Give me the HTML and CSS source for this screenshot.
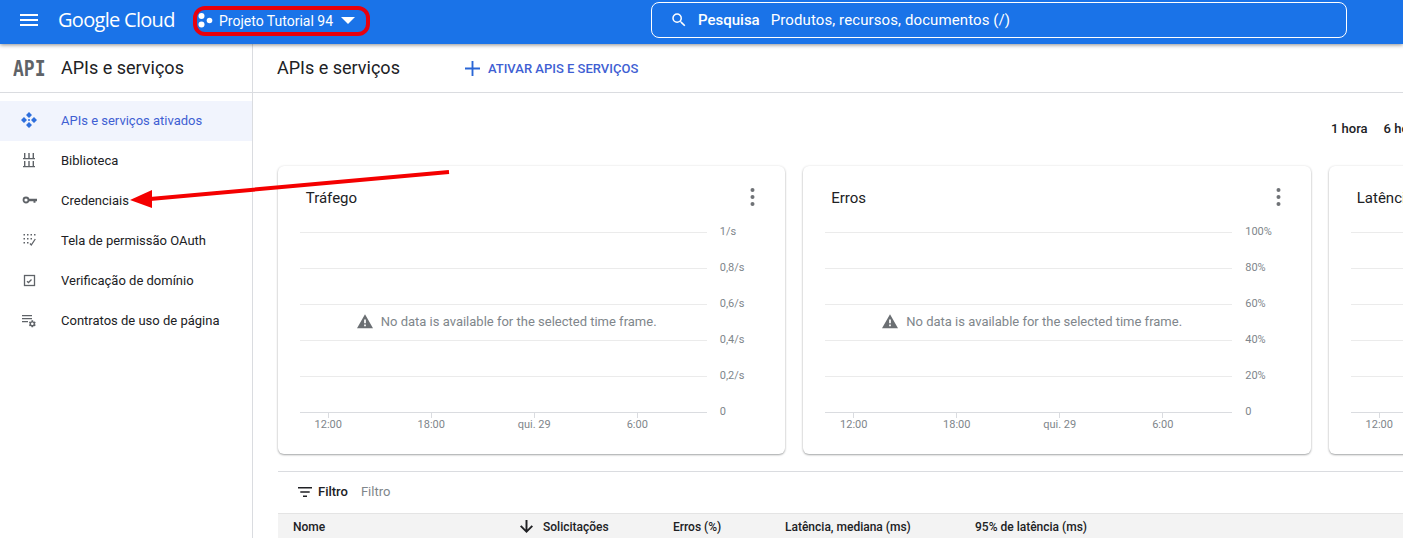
FILE: index.html
```html
<!DOCTYPE html>
<html lang="pt">
<head>
  <meta charset="UTF-8">
  <meta name="viewport" content="width=device-width, initial-scale=1.0">
  <title>APIs e serviços</title>
  <link rel="stylesheet" href="styles.css">
</head>
<body>
  <header class="topbar">
    <svg class="menu-icon" viewBox="0 0 18 12"><path d="M0 0h18v2H0zM0 5h18v2H0zM0 10h18v2H0z"/></svg>
    <span class="logo">Google Cloud</span>
    <div class="project">
      <svg class="project-icon" viewBox="0 0 15 15"><circle cx="3.500" cy="3" r="3"/><circle cx="3.500" cy="11.500" r="3"/><circle cx="11.500" cy="7.500" r="2.800"/></svg>
      <span class="project-name">Projeto Tutorial 94</span>
      <svg class="project-caret" viewBox="0 0 14 7"><path d="M0 0l7 7 7-7z"/></svg>
    </div>
    <div class="search">
      <svg class="search-icon" viewBox="0 0 24 24"><path d="M15.5 14h-.79l-.28-.27A6.47 6.47 0 0 0 16 9.5 6.5 6.5 0 1 0 9.5 16c1.61 0 3.09-.59 4.23-1.57l.27.28v.79l5 4.99L20.49 19l-4.99-5zm-6 0C7.01 14 5 11.99 5 9.5S7.01 5 9.5 5 14 7.01 14 9.5 11.99 14 9.5 14z"/></svg>
      <strong>Pesquisa</strong>
      <span>Produtos, recursos, documentos (/)</span>
    </div>
  </header>

  <div class="layout">
    <aside class="sidebar">
      <div class="side-head">
        <span class="api-mark">API</span>
        <span class="side-title">APIs e serviços</span>
      </div>
      <nav class="nav">
        <a class="nav-item active">
          <svg class="nav-icon" viewBox="0 0 16 16"><path d="M8 0l3 3-3 3-3-3zM8 10l3 3-3 3-3-3zM3 5l3 3-3 3-3-3zM13 5l3 3-3 3-3-3z"/><circle cx="8" cy="8" r="1"/></svg>
          APIs e serviços ativados
        </a>
        <a class="nav-item">
          <svg class="nav-icon" viewBox="0 0 16 16"><path d="M3 1h1.400v5H3zM7.300 1h1.400v5H7.300zM11.600 1H13v5h-1.400zM2 6h12v1.300H2zM3 9h1.400v5H3zM7.300 9h1.400v5H7.300zM11.600 9H13v5h-1.400zM2 14h12v1.300H2z"/></svg>
          Biblioteca
        </a>
        <a class="nav-item">
          <svg class="nav-icon" viewBox="0 0 16 16"><path d="M7 6.800h9v2.400h-1.500v1.600h-2V9.200H7z"/><circle class="key-ring" cx="5" cy="8" r="2.500"/></svg>
          Credenciais
        </a>
        <a class="nav-item">
          <svg class="nav-icon" viewBox="0 0 16 16"><path d="M2.500 2H4v1.500H2.500zM6 2h1.500v1.500H6zM9.500 2H11v1.500H9.500zM13 2h1.500v1.500H13zM2.500 6H4v1.500H2.500zM6 6h1.500v1.500H6zM9.500 6H11v1.500H9.500zM2.500 10H4v1.500H2.500zM6 10h1.500v1.500H6z"/><path class="thin" d="M9 11.500l1.300 1.500 4-6"/></svg>
          Tela de permissão OAuth
        </a>
        <a class="nav-item">
          <svg class="nav-icon" viewBox="0 0 16 16"><rect class="thin" x="3.500" y="3.500" width="10" height="10"/><path class="thin" d="M6 9.200l1.500 1.300 3-3"/></svg>
          Verificação de domínio
        </a>
        <a class="nav-item">
          <svg class="nav-icon" viewBox="0 0 16 16"><path d="M1 3h10v1.300H1zM1 6h10v1.300H1zM1 9h6v1.300H1z"/><path transform="translate(7 7.500) scale(.36)" d="M19.140 12.940c.04-.3.06-.61.06-.94 0-.32-.02-.64-.07-.94l2.030-1.580a.49.49 0 0 0 .12-.61l-1.920-3.320a.488.488 0 0 0-.59-.22l-2.390.96c-.5-.38-1.030-.7-1.620-.94l-.36-2.540a.484.484 0 0 0-.48-.41h-3.840c-.24 0-.43.17-.47.41l-.36 2.540c-.59.24-1.130.57-1.620.94l-2.390-.96c-.22-.08-.47 0-.59.22L2.740 8.870c-.12.21-.08.47.12.61l2.030 1.580c-.05.3-.09.63-.09.94s.02.64.07.94l-2.030 1.580a.49.49 0 0 0-.12.61l1.920 3.320c.12.22.37.29.59.22l2.390-.96c.5.38 1.030.7 1.620.94l.36 2.540c.05.24.24.41.48.41h3.840c.24 0 .44-.17.47-.41l.36-2.540c.59-.24 1.130-.56 1.620-.94l2.390.96c.22.08.47 0 .59-.22l1.920-3.320c.12-.22.07-.47-.12-.61l-2.010-1.580zM12 15.600c-1.980 0-3.600-1.620-3.600-3.600s1.620-3.600 3.600-3.600 3.600 1.620 3.600 3.600-1.620 3.600-3.600 3.600z"/></svg>
          Contratos de uso de página
        </a>
      </nav>
    </aside>

    <main class="main">
      <div class="page-head">
        <h1 class="page-title">APIs e serviços</h1>
        <a class="enable-btn">
          <svg class="plus-icon" viewBox="0 0 16 16"><path d="M7 0h2v7h7v2H9v7H7V9H0V7h7z"/></svg>
          ATIVAR APIS E SERVIÇOS
        </a>
      </div>

      <div class="range">
        <span>1 hora</span>
        <span>6 horas</span>
      </div>

      <div class="cards">
        <section class="card">
          <div class="card-head">
            <h2 class="card-title">Tráfego</h2>
            <svg class="more-icon" viewBox="0 0 5 18"><circle cx="2.500" cy="2" r="2"/><circle cx="2.500" cy="9" r="2"/><circle cx="2.500" cy="16" r="2"/></svg>
          </div>
          <div class="chart">
            <div class="grid-row"><i></i><span>1/s</span></div>
            <div class="grid-row"><i></i><span>0,8/s</span></div>
            <div class="grid-row"><i></i><span>0,6/s</span></div>
            <div class="grid-row"><i></i><span>0,4/s</span></div>
            <div class="grid-row"><i></i><span>0,2/s</span></div>
            <div class="grid-row base"><i></i><span>0</span></div>
            <div class="x-axis"><span>12:00</span><span>18:00</span><span>qui. 29</span><span>6:00</span></div>
            <div class="no-data">
              <svg class="warn-icon" viewBox="0 0 24 22"><path d="M12 0L0 21h24zM13.300 18h-2.600v-2.600h2.600zm0-4.500h-2.600V8h2.600z"/></svg>
              No data is available for the selected time frame.
            </div>
          </div>
        </section>

        <section class="card">
          <div class="card-head">
            <h2 class="card-title">Erros</h2>
            <svg class="more-icon" viewBox="0 0 5 18"><circle cx="2.500" cy="2" r="2"/><circle cx="2.500" cy="9" r="2"/><circle cx="2.500" cy="16" r="2"/></svg>
          </div>
          <div class="chart">
            <div class="grid-row"><i></i><span>100%</span></div>
            <div class="grid-row"><i></i><span>80%</span></div>
            <div class="grid-row"><i></i><span>60%</span></div>
            <div class="grid-row"><i></i><span>40%</span></div>
            <div class="grid-row"><i></i><span>20%</span></div>
            <div class="grid-row base"><i></i><span>0</span></div>
            <div class="x-axis"><span>12:00</span><span>18:00</span><span>qui. 29</span><span>6:00</span></div>
            <div class="no-data">
              <svg class="warn-icon" viewBox="0 0 24 22"><path d="M12 0L0 21h24zM13.300 18h-2.600v-2.600h2.600zm0-4.500h-2.600V8h2.600z"/></svg>
              No data is available for the selected time frame.
            </div>
          </div>
        </section>

        <section class="card">
          <div class="card-head">
            <h2 class="card-title">Latência</h2>
          </div>
          <div class="chart">
            <div class="grid-row"><i></i></div>
            <div class="grid-row"><i></i></div>
            <div class="grid-row"><i></i></div>
            <div class="grid-row"><i></i></div>
            <div class="grid-row"><i></i></div>
            <div class="grid-row base"><i></i></div>
            <div class="x-axis"><span>12:00</span></div>
          </div>
        </section>
      </div>

      <div class="filter">
        <svg class="filter-icon" viewBox="0 0 14 10"><path d="M0 0h14v1.600H0zM2.300 4.200h9.400v1.600H2.300zM5 8.400h4V10H5z"/></svg>
        <strong>Filtro</strong>
        <span>Filtro</span>
      </div>

      <div class="table-head">
        <span class="col-name">Nome</span>
        <svg class="sort-icon" viewBox="0 0 12 12"><path d="M5.100 0h1.800v8.700l3.800-3.800L12 6.100 6 12 0 6.100l1.300-1.200 3.800 3.800z"/></svg>
        <span class="col-req">Solicitações</span>
        <span class="col-err">Erros (%)</span>
        <span class="col-lat">Latência, mediana (ms)</span>
        <span>95% de latência (ms)</span>
      </div>
    </main>
  </div>

  <svg class="arrow" viewBox="0 0 1403 538">
    <path class="arrow-line" d="M449 172L150 199"/>
    <path class="arrow-head" d="M130 200L152 190L152 208z"/>
  </svg>
</body>
</html>
```

FILE: styles.css
```css
* {
  box-sizing: border-box;
}

body {
  margin: 0;
  height: 538px;
  overflow: hidden;
  font-family: Roboto, Arial, sans-serif;
  font-size: 13px;
  color: #202124;
  background: #fff;
}

svg {
  fill: currentColor;
  flex: none;
}

/* top bar */
.topbar {
  position: relative;
  z-index: 1;
  display: flex;
  align-items: center;
  height: 44px;
  padding: 0 0 4px 20px;
  background: #1a73e8;
  color: #fff;
  box-shadow: 0 1px 4px rgba(0, 0, 0, 0.45);
}

.menu-icon {
  width: 18px;
  height: 12px;
}

.logo {
  width: 135px;
  margin: 0 0 2px 20px;
  font-family: "Open Sans", Roboto, sans-serif;
  font-size: 20px;
  letter-spacing: -0.7px;
  white-space: nowrap;
}

.project {
  display: flex;
  align-items: center;
  width: 177px;
  height: 30px;
  margin-top: 1px;
  padding-left: 1px;
  border: 4px solid #e8000d;
  border-radius: 12px;
}

.project-icon {
  width: 15px;
  height: 15px;
}

.project-name {
  margin-left: 6px;
  font-size: 14px;
  white-space: nowrap;
}

.project-caret {
  width: 14px;
  height: 7px;
  margin-left: 8px;
}

.search {
  display: flex;
  align-items: center;
  width: 696px;
  height: 36px;
  margin-left: 281px;
  padding-left: 18px;
  border: 1px solid #fff;
  border-radius: 8px;
  font-size: 15px;
}

.search-icon {
  width: 18px;
  height: 18px;
  margin-right: 10px;
}

.search strong {
  font-weight: 500;
  margin-right: 11px;
}

.search span {
  letter-spacing: 0.1px;
}

/* page frame */
.layout {
  display: flex;
  height: 494px;
}

.sidebar {
  flex: none;
  width: 253px;
  border-right: 1px solid #dadce0;
}

.side-head {
  display: flex;
  align-items: center;
  height: 49px;
  border-bottom: 1px solid #dadce0;
}

.api-mark {
  width: 48px;
  padding-left: 13px;
  margin-right: 13px;
  font-family: "DejaVu Sans Mono", monospace;
  font-size: 18px;
  font-weight: 700;
  color: #5f6368;
  white-space: nowrap;
  transform: scaleY(1.2);
}

.side-title,
.page-title {
  margin: 0 0 2px;
  font-size: 18px;
  font-weight: 400;
}

.nav {
  padding-top: 8px;
}

.nav-item {
  display: flex;
  align-items: center;
  height: 40px;
  padding: 0 0 2px 21px;
  gap: 24px;
}

.nav-item.active {
  background: #f1f4fd;
  color: #3f5fd3;
}

.nav-icon {
  width: 16px;
  height: 16px;
  color: #5f6368;
}

.active .nav-icon {
  color: #2f6fdc;
}

.thin {
  fill: none;
  stroke: currentColor;
  stroke-width: 1.300;
}

.key-ring {
  fill: none;
  stroke: currentColor;
  stroke-width: 1.800;
}

/* main column */
.main {
  flex: 1;
  min-width: 0;
  overflow: hidden;
}

.page-head {
  display: flex;
  align-items: center;
  height: 49px;
  padding-left: 24px;
  border-bottom: 1px solid #dadce0;
}

.enable-btn {
  display: flex;
  align-items: center;
  gap: 8px;
  margin-left: 65px;
  font-size: 13px;
  font-weight: 500;
  color: #3f5fd3;
  white-space: nowrap;
}

.plus-icon {
  width: 15px;
  height: 15px;
  color: #2a66d6;
}

.range {
  display: flex;
  gap: 16px;
  height: 73px;
  padding: 28px 0 0 1078px;
  font-weight: 500;
  line-height: 16px;
  white-space: nowrap;
}

.cards {
  display: flex;
  gap: 18px;
  height: 306px;
  margin-left: 24.75px;
  border-bottom: 1px solid #dadce0;
}

.card {
  position: relative;
  flex: none;
  width: 507.5px;
  height: 288px;
  padding: 0 22px;
  border-radius: 6px;
  background: #fff;
  box-shadow: 0 1px 2px rgba(60, 64, 67, 0.45), 0 0 3px rgba(60, 64, 67, 0.08);
}

.card-head {
  display: flex;
  align-items: center;
  justify-content: space-between;
  height: 66px;
  padding: 0 8px 2px 6px;
}

.card-title {
  margin: 0;
  font-size: 15px;
  font-weight: 400;
}

.more-icon {
  width: 5px;
  height: 18px;
  margin-bottom: 2px;
  color: #6f7276;
}

.chart {
  position: relative;
  font-size: 11px;
  color: #80868b;
}

.grid-row {
  position: relative;
  top: -18px;
  display: flex;
  align-items: center;
  height: 36px;
}

.grid-row i {
  flex: none;
  width: 407px;
  height: 1px;
  margin-right: 13px;
  background: #ebebeb;
}

.grid-row span {
  margin-bottom: 2px;
}

.grid-row.base i {
  background: #dadce0;
}

.x-axis {
  display: flex;
  margin: -35px 0 0 -23px;
  line-height: 13px;
}

.x-axis span {
  flex: none;
  width: 103px;
  text-align: center;
}

.x-axis span::before {
  content: "";
  display: block;
  width: 1px;
  height: 5px;
  margin: 0 auto;
  background: #dadce0;
}

.no-data {
  position: absolute;
  top: 82px;
  left: 57px;
  display: flex;
  align-items: center;
  gap: 8px;
  font-size: 13px;
  color: #80868b;
  white-space: nowrap;
}

.warn-icon {
  width: 16px;
  height: 15px;
  color: #6b6f73;
}

/* table area */
.filter {
  display: flex;
  align-items: center;
  height: 41px;
  margin-left: 25px;
  padding: 0 0 2px 20px;
  font-size: 13px;
}

.filter strong {
  font-weight: 500;
  margin: 0 13px 0 6px;
}

.filter span {
  color: #80868b;
}

.filter-icon {
  width: 14px;
  height: 10px;
}

.table-head {
  display: flex;
  align-items: center;
  height: 26px;
  margin-left: 25px;
  padding-left: 15px;
  background: #f3f3f3;
  border-top: 1px solid #e4e4e4;
  font-size: 12px;
  font-weight: 500;
  white-space: nowrap;
}

.col-name {
  width: 227px;
}

.sort-icon {
  width: 13px;
  height: 13px;
  margin-right: 10px;
}

.col-req {
  width: 130px;
}

.col-err {
  width: 112px;
}

.col-lat {
  width: 190px;
}

/* red annotation over the page */
.arrow {
  position: absolute;
  z-index: 2;
  top: 0;
  left: 0;
  width: 1403px;
  height: 538px;
  pointer-events: none;
}

.arrow-line {
  fill: none;
  stroke: #f40000;
  stroke-width: 4;
}

.arrow-head {
  fill: #f40000;
}
```
